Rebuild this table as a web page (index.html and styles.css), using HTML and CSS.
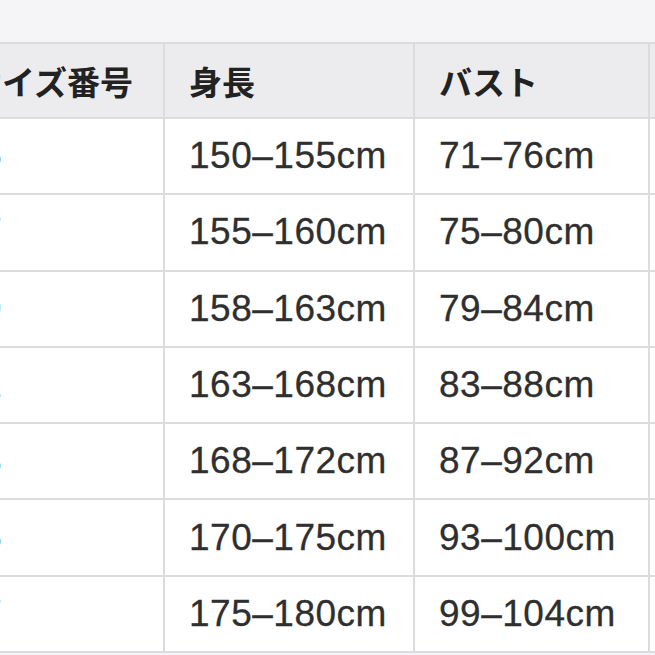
FILE: index.html
```html
<!DOCTYPE html>
<html lang="ja">
<head>
<meta charset="utf-8">
<title>サイズ表</title>
<link rel="stylesheet" href="styles.css">
</head>
<body>
<div class="top"></div>
<table class="size-table">
  <colgroup>
    <col class="c1"><col class="c2"><col class="c3"><col class="c4">
  </colgroup>
  <thead>
    <tr><th>サイズ番号</th><th>身長</th><th>バスト</th><th>ウエスト</th></tr>
  </thead>
  <tbody>
    <tr><td class="num">5</td><td>150–155cm</td><td>71–76cm</td><td></td></tr>
    <tr><td class="num">7</td><td>155–160cm</td><td>75–80cm</td><td></td></tr>
    <tr><td class="num">9</td><td>158–163cm</td><td>79–84cm</td><td></td></tr>
    <tr><td class="num">11</td><td>163–168cm</td><td>83–88cm</td><td></td></tr>
    <tr><td class="num">13</td><td>168–172cm</td><td>87–92cm</td><td></td></tr>
    <tr><td class="num">15</td><td>170–175cm</td><td>93–100cm</td><td></td></tr>
    <tr><td class="num">17</td><td>175–180cm</td><td>99–104cm</td><td></td></tr>
  </tbody>
</table>
</body>
</html>
```
FILE: styles.css
```css
html, body {
  margin: 0;
  padding: 0;
  overflow: hidden;
  background: #f5f5f7;
}
.top {
  height: 42px;
}
.size-table {
  margin-left: -57px;
  border-collapse: collapse;
  table-layout: fixed;
  width: 905px;
  background: #ffffff;
  font-family: "Liberation Sans", "Noto Sans CJK JP", sans-serif;
  color: #2f2f2f;
}
.c1 { width: 220px; }
.c2 { width: 250px; }
.c3 { width: 235px; }
.c4 { width: 200px; }
.size-table th,
.size-table td {
  border: 2px solid #dcdcdf;
  padding: 0 0 0 24px;
  text-align: left;
  vertical-align: middle;
  white-space: nowrap;
  overflow: hidden;
}
.size-table th {
  height: 73px;
  background: #ececee;
  font-family: "Noto Sans CJK JP", sans-serif;
  font-weight: 700;
  font-size: 33px;
  color: #222222;
}
.size-table td {
  height: 74.3px;
  font-size: 37px;
  letter-spacing: 0.5px;
  -webkit-text-stroke: 0.3px #2f2f2f;
}
.size-table td.num {
  text-align: right;
  padding: 0 161px 0 0;
}
```
